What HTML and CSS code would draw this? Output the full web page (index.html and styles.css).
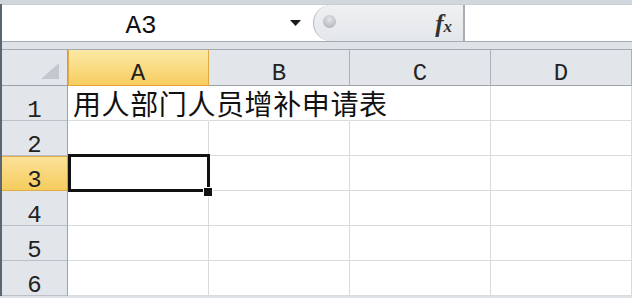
FILE: index.html
```html
<!DOCTYPE html>
<html>
<head>
<meta charset="utf-8">
<title>Excel</title>
<link rel="stylesheet" href="styles.css">
</head>
<body>
<div class="top-strip"></div>
<div class="main">
  <div class="formula-bar">
    <div class="name-box">
      <span class="name-text">A3</span>
      <span class="dropdown">
        <svg width="11" height="6" viewBox="0 0 11 6"><path d="M0 0H11L5.5 6Z" fill="#1a1a1a"/></svg>
      </span>
    </div>
    <div class="fx-box">
      <span class="knob"></span>
      <span class="fx"><span class="fx-f">f</span><span class="fx-x">x</span></span>
    </div>
    <div class="formula-input"></div>
  </div>
  <div class="gap"></div>
  <div class="sheet">
    <div class="hdr corner">
      <svg width="18" height="16" viewBox="0 0 18 16"><path d="M18 0V16H0Z" fill="#c3c8ce"/></svg>
    </div>
    <div class="hdr col sel-hdr"><span class="lbl">A</span></div>
    <div class="hdr col"><span class="lbl">B</span></div>
    <div class="hdr col"><span class="lbl">C</span></div>
    <div class="hdr col"><span class="lbl">D</span></div>

    <div class="hdr row"><span class="lbl">1</span></div>
    <div class="cell text-cell no-right"><span class="cell-text" lang="zh-CN">用人部门人员增补申请表</span></div>
    <div class="cell no-right"></div>
    <div class="cell"></div>
    <div class="cell"></div>

    <div class="hdr row"><span class="lbl">2</span></div>
    <div class="cell"></div>
    <div class="cell"></div>
    <div class="cell"></div>
    <div class="cell"></div>

    <div class="hdr row sel-row"><span class="lbl">3</span></div>
    <div class="cell active"><div class="sel"></div><div class="handle"></div></div>
    <div class="cell"></div>
    <div class="cell"></div>
    <div class="cell"></div>

    <div class="hdr row"><span class="lbl">4</span></div>
    <div class="cell"></div>
    <div class="cell"></div>
    <div class="cell"></div>
    <div class="cell"></div>

    <div class="hdr row"><span class="lbl">5</span></div>
    <div class="cell"></div>
    <div class="cell"></div>
    <div class="cell"></div>
    <div class="cell"></div>

    <div class="hdr row"><span class="lbl">6</span></div>
    <div class="cell"></div>
    <div class="cell"></div>
    <div class="cell"></div>
    <div class="cell"></div>
  </div>
</div>
</body>
</html>
```
FILE: styles.css
```css
* { box-sizing: border-box; }
html, body { margin: 0; padding: 0; }
body {
  width: 632px;
  height: 298px;
  overflow: hidden;
  background: #dfe2e6;
  font-family: "Liberation Mono", monospace;
  color: #1a1a1a;
}
.top-strip {
  height: 4px;
  background: #d2d7dd;
}
.main {
  border-left: 2px solid #5b6673;
}
.formula-bar {
  display: flex;
  height: 38px;
  background: #fff;
  border-top: 1px solid #c9ced4;
  border-bottom: 1px solid #a6acb4;
}
.name-box {
  width: 311px;
  display: flex;
  align-items: center;
}
.name-text {
  flex: 1;
  text-align: center;
  font-family: "Liberation Mono", monospace;
  font-size: 26px;
  line-height: 26px;
  padding-top: 5px;
  color: #111;
}
.dropdown {
  width: 33px;
  padding-left: 10px;
  display: flex;
  align-items: center;
  padding-bottom: 1px;
}
.fx-box {
  position: relative;
  width: 152px;
  display: flex;
  align-items: center;
  background: linear-gradient(#eef0f2, #e4e7ea);
  border-left: 1px solid #b3b8bf;
  border-right: 2px solid #a9aeb5;
  border-radius: 19px 0 0 19px;
}
.knob {
  width: 13px;
  height: 13px;
  margin-left: 9px;
  margin-top: -3px;
  border-radius: 50%;
  background: radial-gradient(circle at 50% 35%, #e4e6e8 0%, #c2c5c9 55%, #a3a7ac 100%);
}
.fx {
  margin-left: auto;
  margin-right: 11px;
  font-family: "Liberation Serif", serif;
  font-style: italic;
  font-weight: bold;
  color: #333;
  display: flex;
  align-items: baseline;
  padding-top: 2px;
}
.fx-f { font-size: 25px; }
.fx-x { font-size: 17px; }
.formula-input {
  flex: 1;
  background: #fff;
}
.gap {
  height: 7px;
  background: #dfe2e6;
}
.sheet {
  display: grid;
  grid-template-columns: 66px repeat(4, 141px);
  grid-template-rows: 36px repeat(6, 35px);
  background: #fff;
  border-top: 1px solid #a3a9b1;
}
.hdr {
  display: flex;
  justify-content: center;
  align-items: flex-end;
  font-family: "Liberation Mono", monospace;
  font-size: 24px;
  color: #222;
  background: #e2e6eb;
}
.lbl {
  display: block;
  height: 14px;
  line-height: 14px;
}
.col {
  border-right: 1px solid #adb2b9;
  border-bottom: 1px solid #9ca3ab;
  padding-bottom: 4px;
}
.corner {
  justify-content: flex-end;
  padding: 0 8px 6px 0;
  border-right: 1px solid #9ca3ab;
  border-bottom: 1px solid #9ca3ab;
}
.row {
  border-right: 1px solid #9ca3ab;
  border-bottom: 1px solid #bcc1c7;
  padding-bottom: 2px;
}
.sel-hdr {
  background: linear-gradient(#fce9a6, #f7cd5f);
  border-right-color: #e0aa45;
  border-bottom-color: #e9a23a;
  box-shadow: inset 1px 0 0 #e0aa45;
}
.sel-row {
  background: linear-gradient(#fbe29a, #f6cc5e);
  border-bottom-color: #e0aa45;
  box-shadow: inset 0 1px 0 #e0aa45;
}
.cell {
  position: relative;
  border-right: 1px solid #d8dadd;
  border-bottom: 1px solid #d8dadd;
}
.no-right {
  border-right-color: transparent;
}
.text-cell {
  display: flex;
  align-items: flex-end;
  padding: 0 0 3px 5px;
}
.cell-text {
  display: block;
  height: 28px;
  white-space: nowrap;
  font-family: "Noto Sans CJK SC", "Liberation Sans", sans-serif;
  font-weight: 400;
  font-size: 28px;
  line-height: 28px;
  letter-spacing: 0.6px;
  color: #111;
  position: relative;
  z-index: 2;
}
.sel {
  position: absolute;
  left: 0;
  top: -2px;
  right: -2px;
  bottom: -2px;
  border: 3px solid #111;
  z-index: 3;
}
.handle {
  position: absolute;
  right: -5px;
  bottom: -7px;
  width: 10px;
  height: 10px;
  background: #111;
  border: 1px solid #fff;
  z-index: 4;
}
```
